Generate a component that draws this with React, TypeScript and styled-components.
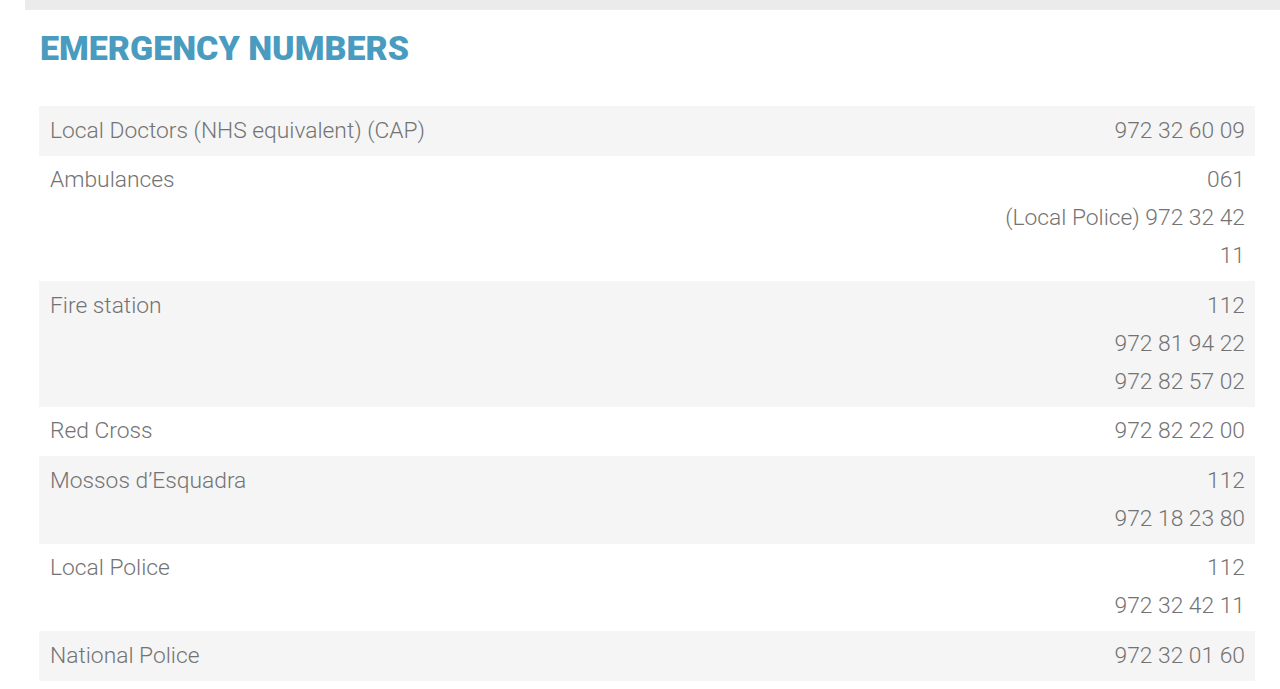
import React from "react";
import styled, { createGlobalStyle } from "styled-components";

const GlobalStyle = createGlobalStyle`
  body {
    margin: 0;
    background: #ffffff;
    font-family: "Roboto", "Liberation Sans", sans-serif;
  }
`;

const Page = styled.div`
  width: 1280px;
  height: 689px;
  overflow: hidden;
`;

const TopBar = styled.div`
  height: 10px;
  margin-left: 25px;
  background: #ebebeb;
`;

const Section = styled.section`
  padding: 0 25px 0 39px;
`;

const Title = styled.h2`
  margin: 21px 0 0 1px;
  height: 75px;
  font-family: "Roboto", sans-serif;
  font-weight: 900;
  font-size: 34px;
  line-height: 34px;
  letter-spacing: 0px;
  color: #4a9bc0;
`;

const Table = styled.div`
  display: grid;
  grid-template-columns: 1fr 272px;
`;

const Cell = styled.div<{ $shaded: boolean; $right?: boolean }>`
  background: ${(p) => (p.$shaded ? "#f5f5f5" : "#ffffff")};
  padding: 5.5px 10px 6px 11px;
  font-size: 22.8px;
  font-weight: 300;
  line-height: 38px;
  color: #737373;
  text-align: ${(p) => (p.$right ? "right" : "left")};
`;

const rows: { name: string; numbers: string[] }[] = [
  { name: "Local Doctors (NHS equivalent) (CAP)", numbers: ["972 32 60 09"] },
  { name: "Ambulances", numbers: ["061", "(Local Police) 972 32 42 11"] },
  { name: "Fire station", numbers: ["112", "972 81 94 22", "972 82 57 02"] },
  { name: "Red Cross", numbers: ["972 82 22 00"] },
  { name: "Mossos d’Esquadra", numbers: ["112", "972 18 23 80"] },
  { name: "Local Police", numbers: ["112", "972 32 42 11"] },
  { name: "National Police", numbers: ["972 32 01 60"] },
];

export default function App() {
  return (
    <Page>
      <GlobalStyle />
      <TopBar />
      <Section>
        <Title>EMERGENCY NUMBERS</Title>
        <Table>
          {rows.map((r, i) => (
            <React.Fragment key={r.name}>
              <Cell $shaded={i % 2 === 0}>{r.name}</Cell>
              <Cell $shaded={i % 2 === 0} $right>
                {r.numbers.map((n) => (
                  <div key={n}>{n}</div>
                ))}
              </Cell>
            </React.Fragment>
          ))}
        </Table>
      </Section>
    </Page>
  );
}
